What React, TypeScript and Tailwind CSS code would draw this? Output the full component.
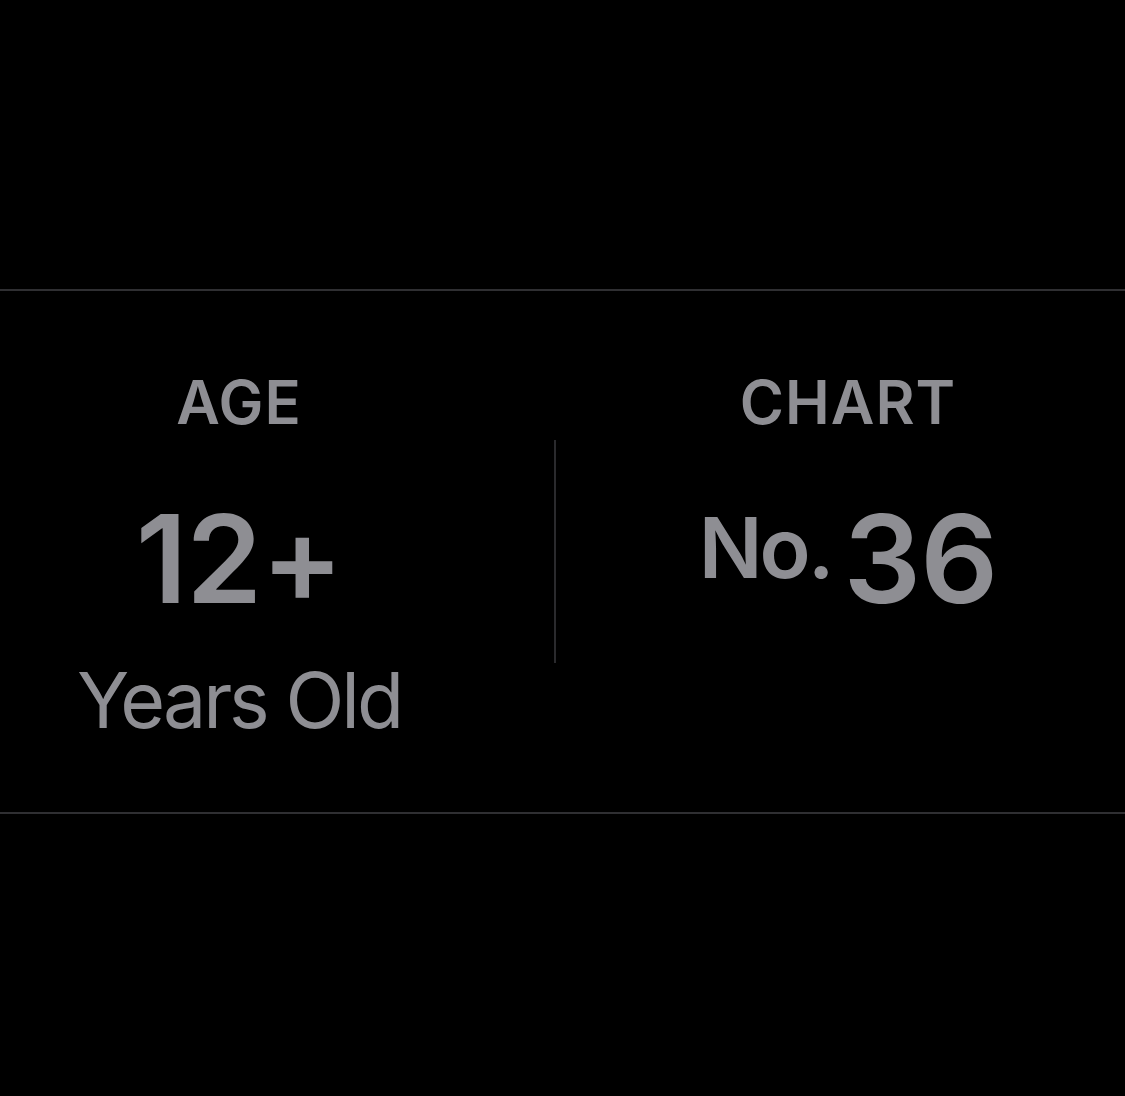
export default function App() {
  const font = { fontFamily: 'Inter, "Noto Sans", sans-serif' };
  return (
    <div className="w-[1125px] h-[1096px] bg-black text-[#8e8e93]" style={font}>
      <div className="pt-[289px]">
        <div className="h-[2px] bg-[#2f2f32]" />
        <div className="flex h-[521px]">
          <div className="w-[478px] flex flex-col items-center pt-[81px]">
            <div className="text-[60px] leading-none font-semibold tracking-[1px]">AGE</div>
            <div className="mt-[66px] text-[122px] leading-none font-semibold tracking-[-1px]">12+</div>
            <div className="mt-[42px] text-[77px] leading-none font-normal tracking-[-3px]">Years Old</div>
          </div>
          <div className="ml-[76px] mt-[149px] w-[2px] h-[223px] bg-[#2a2a2d]" />
          <div className="ml-[53px] w-[478px] flex flex-col items-center pt-[81px]">
            <div className="text-[60px] leading-none font-semibold tracking-[1px]">CHART</div>
            <div className="mt-[66px] flex items-start">
              <span className="mt-[8px] text-[84px] leading-none font-semibold tracking-[-3px]">No.</span>
              <span className="ml-[12px] text-[122px] leading-none font-semibold tracking-[-1px]">36</span>
            </div>
          </div>
        </div>
        <div className="h-[2px] bg-[#2f2f32]" />
      </div>
    </div>
  );
}
